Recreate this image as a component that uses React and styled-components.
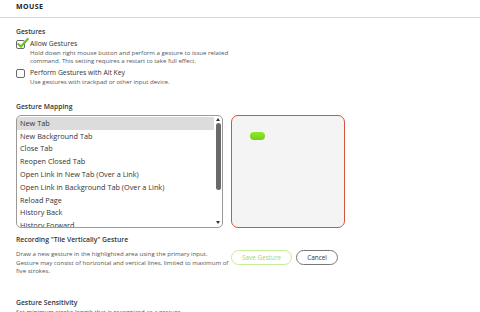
import React from "react";
import styled, { createGlobalStyle } from "styled-components";

const GlobalStyle = createGlobalStyle`
  html, body {
    margin: 0;
    padding: 0;
    background: #fff;
    font-family: "Open Sans", "Noto Sans", sans-serif;
    color: #333;
  }
`;

const mappings = [
  "New Tab",
  "New Background Tab",
  "Close Tab",
  "Reopen Closed Tab",
  "Open Link in New Tab (Over a Link)",
  "Open Link in Background Tab (Over a Link)",
  "Reload Page",
  "History Back",
  "History Forward",
];

function Checkbox({ checked }) {
  return (
    <Box>
      {checked && (
        <svg width="14" height="13" viewBox="0 0 14 13">
          <path
            d="M2.2 7 L5 9.6 L11.8 2"
            fill="none"
            stroke="#6cc420"
            strokeWidth="2.2"
            strokeLinecap="round"
            strokeLinejoin="round"
          />
        </svg>
      )}
    </Box>
  );
}

function Option({ checked, label, children }) {
  return (
    <OptionRow>
      <Checkbox checked={checked} />
      <div>
        <OptionLabel>{label}</OptionLabel>
        <Hint>{children}</Hint>
      </div>
    </OptionRow>
  );
}

function Triangle({ down }) {
  return (
    <svg width="4" height="3" viewBox="0 0 4 3">
      <path d={down ? "M0 0 H4 L2 3 Z" : "M0 3 H4 L2 0 Z"} fill="#333" />
    </svg>
  );
}

export default function App() {
  return (
    <Page>
      <GlobalStyle />
      <Header>MOUSE</Header>
      <Content>
        <SubTitle>Gestures</SubTitle>
        <Option checked label="Allow Gestures">
          Hold down right mouse button and perform a gesture to issue related
          <br />
          command. This setting requires a restart to take full effect.
        </Option>
        <Option label="Perform Gestures with Alt Key">
          Use gestures with trackpad or other input device.
        </Option>

        <SubTitle className="mapping">Gesture Mapping</SubTitle>
        <MappingRow>
          <ListBox>
            <List>
              {mappings.map((m, i) => (
                <Item key={m} $selected={i === 0}>
                  {m}
                </Item>
              ))}
            </List>
            <ScrollBar>
              <Triangle />
              <Thumb />
              <Triangle down />
            </ScrollBar>
          </ListBox>
          <Canvas>
            <Stroke />
          </Canvas>
        </MappingRow>

        <SubTitle className="record">Recording "Tile Vertically" Gesture</SubTitle>
        <RecordRow>
          <Hint className="record">
            Draw a new gesture in the highlighted area using the primary input.
            <br />
            Gesture may consist of horizontal and vertical lines, limited to maximum of
            <br />
            five strokes.
          </Hint>
          <Buttons>
            <Button $variant="save">Save Gesture</Button>
            <Button>Cancel</Button>
          </Buttons>
        </RecordRow>

        <SubTitle className="sensitivity">Gesture Sensitivity</SubTitle>
        <Hint>Set minimum stroke length that is recognized as a gesture.</Hint>
      </Content>
    </Page>
  );
}

const Page = styled.div`
  width: 480px;
  height: 312px;
  overflow: hidden;
`;

const Header = styled.div`
  height: 18px;
  padding-left: 16px;
  box-sizing: border-box;
  border-bottom: 1px solid #d8d8d8;
  font-size: 7px;
  font-weight: 700;
  letter-spacing: 0.4px;
  line-height: 14px;
  color: #222;
`;

const Content = styled.div`
  padding: 0 16px;
`;

const SubTitle = styled.div`
  margin-top: 9px;
  font-size: 6.8px;
  font-weight: 600;
  line-height: 10px;
  color: #333;

  &.mapping {
    margin-top: 15.8px;
  }
  &.record {
    margin-top: 7px;
  }
  &.sensitivity {
    margin-top: 22px;
  }
`;

const OptionRow = styled.div`
  display: flex;
  gap: 5px;
  margin-top: 2.3px;

  & + & {
    margin-top: 2.7px;
  }
`;

const Box = styled.div`
  flex: none;
  width: 9px;
  height: 9px;
  margin-top: 1px;
  box-sizing: border-box;
  border: 1px solid #6a6a6a;
  border-radius: 2px;
  background: #fff;
  position: relative;

  svg {
    position: absolute;
    left: -1px;
    top: -4px;
  }
`;

const OptionLabel = styled.div`
  font-size: 6.8px;
  line-height: 9.5px;
  color: #333;
`;

const Hint = styled.div`
  font-size: 6.1px;
  line-height: 8.5px;
  color: #555;

  &.record {
    flex: none;
    width: 212px;
    line-height: 8.7px;
    white-space: nowrap;
  }
`;

const MappingRow = styled.div`
  display: flex;
  gap: 8px;
  margin-top: 2.7px;
`;

const ListBox = styled.div`
  width: 207px;
  height: 113px;
  box-sizing: border-box;
  border: 1px solid #9a9a9a;
  border-radius: 5px;
  display: flex;
  overflow: hidden;
`;

const List = styled.div`
  flex: 1;
  padding-top: 0.8px;
`;

const Item = styled.div`
  height: 12.8px;
  line-height: 12.8px;
  padding-left: 3px;
  font-size: 7.3px;
  color: #333;
  white-space: nowrap;
  background: ${(p) => (p.$selected ? "#dcdcdc" : "transparent")};
`;

const ScrollBar = styled.div`
  width: 8px;
  display: flex;
  flex-direction: column;
  align-items: center;
  justify-content: space-between;
  padding: 2px 0 3px;
  box-sizing: border-box;

  svg {
    flex: none;
  }
`;

const Thumb = styled.div`
  width: 5px;
  height: 67px;
  margin-top: 2px;
  margin-bottom: auto;
  border-radius: 3px;
  background: #6a6a6a;
`;

const Canvas = styled.div`
  width: 114px;
  height: 113px;
  box-sizing: border-box;
  border: 1px solid #d4553d;
  border-radius: 7px;
  background: #f4f4f4;
  padding: 16px 0 0 18px;
`;

const Stroke = styled.div`
  width: 15px;
  height: 8px;
  border-radius: 4px;
  background: linear-gradient(#90e82c, #74d015);
`;

const RecordRow = styled.div`
  display: flex;
  align-items: flex-start;
  gap: 3px;
  margin-top: 5px;
`;

const Buttons = styled.div`
  display: flex;
  gap: 4px;
`;

const Button = styled.button`
  height: 15.5px;
  padding: 0 10px;
  border-radius: 8px;
  background: #fff;
  font-family: inherit;
  font-size: 6.4px;
  line-height: 13px;
  border: 1px solid ${(p) => (p.$variant === "save" ? "#c6ec99" : "#777")};
  color: ${(p) => (p.$variant === "save" ? "#a3d76a" : "#333")};
`;
